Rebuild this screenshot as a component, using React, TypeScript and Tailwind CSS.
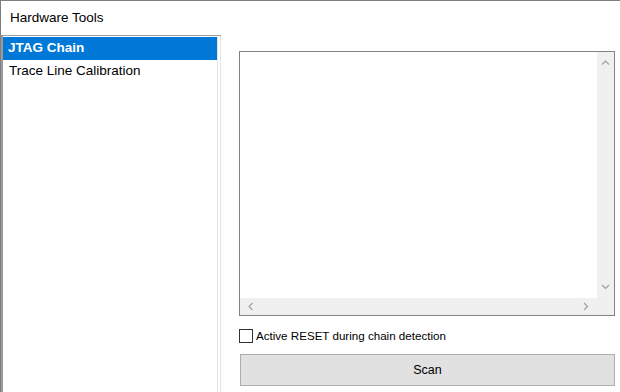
import React from 'react';

const Chevron = ({ dir }: { dir: 'up' | 'down' | 'left' | 'right' }) => {
  const d = {
    up: 'M1 5.5 L4.5 2 L8 5.5',
    down: 'M1 2 L4.5 5.5 L8 2',
    left: 'M5.5 1 L2 4.5 L5.5 8',
    right: 'M2 1 L5.5 4.5 L2 8',
  }[dir];
  const w = dir === 'up' || dir === 'down' ? 9 : 8;
  const h = dir === 'up' || dir === 'down' ? 8 : 9;
  return (
    <svg width={w} height={h} viewBox={`0 0 ${w} ${h}`} fill="none">
      <path d={d} stroke="#a0a0a0" strokeWidth="1.2" />
    </svg>
  );
};

export default function App() {
  const items = ['JTAG Chain', 'Trace Line Calibration'];

  return (
    <div
      className="w-[620px] h-[392px] bg-white flex flex-col border-t border-l border-[#7f7f7f] overflow-hidden text-[13.5px] text-black"
      style={{ fontFamily: '"Liberation Sans", Arial, sans-serif' }}
    >
      <div className="h-[34px] flex items-center pl-[9px] pt-[1px]">Hardware Tools</div>

      <div className="flex flex-1 min-h-0">
        {/* item list */}
        <div className="w-[216px] border-t border-[#a0a0a0] border-l-2 border-l-[#9a9a9a] pt-[1px]">
          {items.map((item, i) => (
            <div
              key={item}
              className={
                i === 0
                  ? 'h-[23px] flex items-center pl-[5px] bg-[#0078d7] text-white font-bold'
                  : 'h-[23px] flex items-center pl-[6px]'
              }
            >
              {item}
            </div>
          ))}
        </div>

        {/* splitter */}
        <div className="w-[4px] flex border-t border-[#a0a0a0]">
          <div className="w-px bg-[#e3e3e3]" />
          <div className="w-[2px]" />
          <div className="w-px bg-[#e3e3e3]" />
        </div>

        {/* right panel */}
        <div className="flex-1 pl-[18px] pr-[5px] pt-[16px] flex flex-col">
          <div className="h-[265px] border border-[#828282] flex flex-col">
            <div className="flex flex-1 min-h-0">
              <div className="flex-1" />
              <div className="w-[17px] bg-[#f0f0f0] flex flex-col items-center justify-between py-[7px]">
                <Chevron dir="up" />
                <Chevron dir="down" />
              </div>
            </div>
            <div className="h-[17px] flex">
              <div className="flex-1 bg-[#f0f0f0] flex items-center justify-between px-[7px]">
                <Chevron dir="left" />
                <Chevron dir="right" />
              </div>
              <div className="w-[17px] bg-[#f0f0f0]" />
            </div>
          </div>

          <label className="flex items-center mt-[13px] h-[14px] text-[11.6px]">
            <span className="w-[14px] h-[14px] border border-[#333333] bg-white" />
            <span className="ml-[3px]">Active RESET during chain detection</span>
          </label>

          <button className="mt-[11px] ml-[1px] h-[32px] bg-[#e1e1e1] border border-[#adadad] text-[12.5px] flex items-center justify-center">
            Scan
          </button>
        </div>
      </div>
    </div>
  );
}
